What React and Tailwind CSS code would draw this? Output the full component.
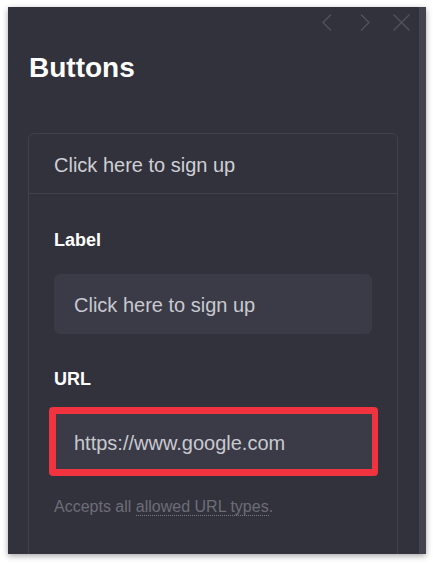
import React from "react";

const F = { fontFamily: '"Liberation Sans", Arial, Helvetica, sans-serif' };

function ChevLeft() {
  return (
    <svg width="10" height="17" viewBox="0 0 10 17" fill="none">
      <polyline points="9,0.5 1,8.5 9,16.5" stroke="#52525d" strokeWidth="1.3" />
    </svg>
  );
}
function ChevRight() {
  return (
    <svg width="10" height="17" viewBox="0 0 10 17" fill="none">
      <polyline points="1,0.5 9,8.5 1,16.5" stroke="#52525d" strokeWidth="1.3" />
    </svg>
  );
}
function XIcon() {
  return (
    <svg width="17" height="17" viewBox="0 0 17 17" fill="none">
      <line x1="0.5" y1="0.5" x2="16.5" y2="16.5" stroke="#52525d" strokeWidth="1.3" />
      <line x1="16.5" y1="0.5" x2="0.5" y2="16.5" stroke="#52525d" strokeWidth="1.3" />
    </svg>
  );
}

export default function App() {
  return (
    <div className="min-h-screen bg-white pt-[7px] pl-[8px]" style={F}>
      <div className="w-[418px] h-[547px] bg-[#32323c] flex overflow-hidden shadow-[0_2px_6px_rgba(0,0,0,0.35)]">
        <div className="flex-1 flex flex-col">
          <div className="flex justify-end items-center pt-[7px] pr-[9px] h-[24px]">
            <ChevLeft />
            <div className="w-[28px]" />
            <ChevRight />
            <div className="w-[23px]" />
            <XIcon />
          </div>
          <h1 className="mt-[20px] ml-[21px] text-[28px] leading-[34px] font-bold text-white">Buttons</h1>
          <div className="mt-[48px] ml-[20px] w-[370px] border border-[#41414c] rounded-[6px] shrink-0">
            <div className="h-[60px] border-b border-[#41414c] flex items-center pl-[25px] pt-[3px] text-[20px] text-[#cfcfd5]">
              Click here to sign up
            </div>
            <div className="px-[25px] pt-[34px] pb-[40px]">
              <div className="text-[18px] leading-[24px] font-bold text-white">Label</div>
              <div className="mt-[22px] w-[318px] h-[60px] rounded-[6px] bg-[#3a3b47] flex items-center pl-[20px] pt-[1px] text-[20px] text-[#c9c9d0]">
                Click here to sign up
              </div>
              <div className="mt-[33px] text-[18px] leading-[24px] font-bold text-white">URL</div>
              <div className="mt-[16px] -ml-[5px] w-[329px] h-[69px] rounded-[4px] bg-[#f1323f] pt-[7px] pb-[7px] pl-[7px] pr-[6px]">
                <div className="h-full bg-[#3a3b47] flex items-center pl-[18px] pt-[3px] text-[20px] text-[#c9c9d0]">
                  https://www.google.com
                </div>
              </div>
              <div className="mt-[19px] text-[16px] leading-[24px] text-[#6d6d78]">
                Accepts all{" "}
                <span className="border-b border-dotted border-[#7a7a85]">allowed URL types</span>.
              </div>
            </div>
          </div>
        </div>
        <div className="w-[7px] bg-[#43434f] shrink-0" />
      </div>
    </div>
  );
}
